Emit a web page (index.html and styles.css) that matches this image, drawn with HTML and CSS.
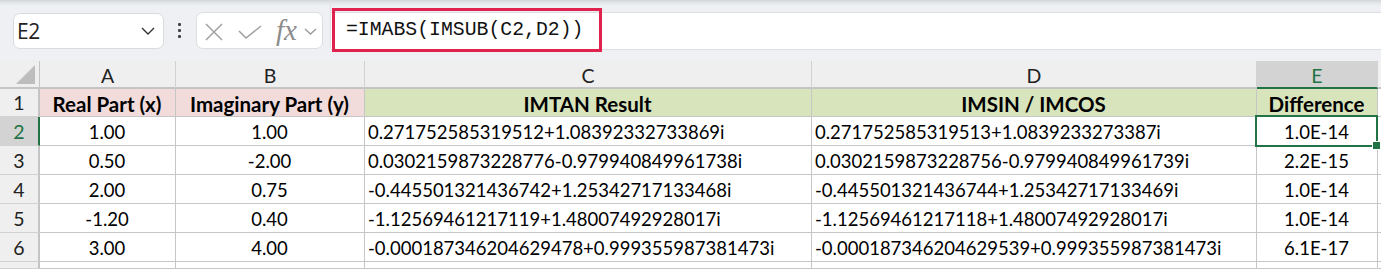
FILE: index.html
```html
<!DOCTYPE html>
<html lang="en">
<head>
<meta charset="utf-8">
<title>IMABS sheet</title>
<link rel="stylesheet" href="styles.css">
</head>
<body>
<div class="toolbar">
  <div class="namebox">
    <span class="name">E2</span>
    <svg class="chev" width="14" height="8" viewBox="0 0 14 8"><path d="M1 1 L7 7 L13 1" fill="none" stroke="#333" stroke-width="1.4"/></svg>
  </div>
  <div class="dots"><i></i><i></i><i></i></div>
  <div class="fxbox">
    <svg class="ix" width="18" height="18" viewBox="0 0 18 18"><path d="M1 1 L17 17 M17 1 L1 17" stroke="#a0a0a0" stroke-width="1.5" fill="none"/></svg>
    <svg class="ic" width="24" height="14" viewBox="0 0 24 14"><path d="M1 6 L8 13 L23 1" stroke="#a0a0a0" stroke-width="1.5" fill="none"/></svg>
    <span class="fx">fx</span>
    <svg class="iv" width="13" height="7" viewBox="0 0 13 7"><path d="M1 1 L6.5 6 L12 1" fill="none" stroke="#9a9a9a" stroke-width="1.3"/></svg>
  </div>
  <div class="sep"></div>
  <div class="formula">
    <div class="hl">=IMABS(IMSUB(C2,D2))</div>
  </div>
</div>

<div class="sheet">
  <div class="ch corner"><span class="tri"></span></div>
  <div class="ch">A</div>
  <div class="ch">B</div>
  <div class="ch">C</div>
  <div class="ch">D</div>
  <div class="ch sel">E</div>
  <div class="ch rest"></div>

  <div class="rh">1</div>
  <div class="c hd pink">Real Part (x)</div>
  <div class="c hd pink">Imaginary Part (y)</div>
  <div class="c hd green">IMTAN Result</div>
  <div class="c hd green">IMSIN / IMCOS</div>
  <div class="c hd green">Difference</div>
  <div class="c blank"></div>

  <div class="rh sel">2</div>
  <div class="c ctr">1.00</div>
  <div class="c ctr">1.00</div>
  <div class="c">0.271752585319512+1.08392332733869i</div>
  <div class="c">0.271752585319513+1.0839233273387i</div>
  <div class="c ctr active">1.0E-14</div>
  <div class="c blank"></div>

  <div class="rh">3</div>
  <div class="c ctr">0.50</div>
  <div class="c ctr">-2.00</div>
  <div class="c">0.0302159873228776-0.979940849961738i</div>
  <div class="c">0.0302159873228756-0.979940849961739i</div>
  <div class="c ctr">2.2E-15</div>
  <div class="c blank"></div>

  <div class="rh">4</div>
  <div class="c ctr">2.00</div>
  <div class="c ctr">0.75</div>
  <div class="c">-0.445501321436742+1.25342717133468i</div>
  <div class="c">-0.445501321436744+1.25342717133469i</div>
  <div class="c ctr">1.0E-14</div>
  <div class="c blank"></div>

  <div class="rh">5</div>
  <div class="c ctr">-1.20</div>
  <div class="c ctr">0.40</div>
  <div class="c">-1.12569461217119+1.48007492928017i</div>
  <div class="c">-1.12569461217118+1.48007492928017i</div>
  <div class="c ctr">1.0E-14</div>
  <div class="c blank"></div>

  <div class="rh">6</div>
  <div class="c ctr">3.00</div>
  <div class="c ctr">4.00</div>
  <div class="c">-0.000187346204629478+0.999355987381473i</div>
  <div class="c">-0.000187346204629539+0.999355987381473i</div>
  <div class="c ctr">6.1E-17</div>
  <div class="c blank"></div>

  <div class="rh"></div>
  <div class="c"></div>
  <div class="c"></div>
  <div class="c"></div>
  <div class="c"></div>
  <div class="c"></div>
  <div class="c blank"></div>
</div>
</body>
</html>
```

FILE: styles.css
```css
* { box-sizing: border-box; }
html, body { margin: 0; padding: 0; background: #ffffff; }
body { width: 1381px; height: 269px; overflow: hidden; font-family: Lato, "Open Sans", sans-serif; }

.toolbar {
  height: 61px;
  display: flex;
  align-items: flex-start;
  padding: 13px 0 0 13px;
  background: linear-gradient(#d3d6da 0, #e4e7ea 3px, #eef0f3 6px);
}
.namebox {
  width: 151px;
  height: 36px;
  background: #fff;
  border: 1px solid #d9dbde;
  border-radius: 7px;
  display: flex;
  align-items: center;
  justify-content: space-between;
  padding: 0 8px 0 3px;
}
.name { font-family: "Open Sans", sans-serif; font-size: 21px; color: #222; letter-spacing: -0.5px; }
.dots {
  width: 4px;
  margin: 10px 14px 0 14px;
  display: flex;
  flex-direction: column;
  gap: 3px;
}
.dots i { display: block; width: 3px; height: 3px; background: #444; border-radius: 1px; }
.fxbox {
  width: 127px;
  height: 37px;
  margin-top: -1px;
  background: #fff;
  border: 1px solid #dcdee1;
  border-radius: 7px;
  display: flex;
  align-items: center;
  padding: 0 0 0 8px;
}
.ix { margin-top: 2px; }
.ic { margin-left: 15px; margin-top: 2px; }
.fx {
  font-family: "Liberation Serif", serif;
  font-style: italic;
  font-size: 29px;
  color: #8c8c8c;
  line-height: 1;
  margin-left: 14px;
  margin-top: -1px;
}
.iv { margin-left: 7px; margin-top: 1px; }
.sep { width: 1px; height: 48px; margin: -13px 0 0 7px; background: #dfe1e4; }
.formula {
  flex: 1;
  height: 38px;
  margin-top: -1px;
  background: #fff;
  border-top: 1px solid #dcdee1;
  border-bottom: 1px solid #dcdee1;
  padding-left: 1px;
  display: flex;
  align-items: flex-start;
}
.hl {
  width: 270px;
  height: 44px;
  margin-top: -5px;
  border: 3px solid #e0224e;
  font-family: "Liberation Mono", monospace;
  font-size: 19.8px;
  color: #111;
  padding-left: 11px;
  display: flex;
  align-items: center;
}

.sheet {
  display: grid;
  grid-template-columns: 40px 136px 189px 447px 445px 121px 1fr;
  grid-template-rows: 28px 28px repeat(5, 29px) 1fr;
  height: 208px;
  font-size: 18.5px;
  color: #000;
}
.ch {
  background: #efefef;
  border-right: 1px solid #d2d2d2;
  border-bottom: 2px solid #c4c4c4;
  display: flex;
  align-items: center;
  justify-content: center;
  font-size: 19.5px;
  color: #222;
  padding-top: 2px;
}
.ch.corner { position: relative; border-right: 1px solid #c4c4c4; }
.tri {
  position: absolute;
  right: 4px;
  bottom: 3px;
  width: 0;
  height: 0;
  border-left: 19px solid transparent;
  border-bottom: 19px solid #bdbdbd;
}
.ch.sel { background: #d3d3d3; color: #217346; border-bottom: 2px solid #217346; }
.ch.rest { border-right: none; background: #f2f2f2; }
.rh {
  background: #efefef;
  border-right: 2px solid #c4c4c4;
  border-bottom: 1px solid #d2d2d2;
  display: flex;
  align-items: center;
  justify-content: center;
  font-size: 19.5px;
  color: #222;
}
.rh.sel { background: #d3d3d3; color: #217346; border-right: 2px solid #217346; }
.c {
  border-right: 1px solid #c6c6c6;
  border-bottom: 1px solid #c6c6c6;
  display: flex;
  align-items: center;
  padding: 1px 4px 0 3px;
  white-space: nowrap;
  overflow: visible;
}
.c.ctr, .c.hd { justify-content: center; }
.c.hd { font-weight: 700; font-size: 20.5px; padding-top: 2px; }
.pink { background: #f2dcdb; }
.green { background: #d8e4bc; }
.c.blank { border-right: none; }
.active { position: relative; }
.active::before {
  content: "";
  position: absolute;
  left: -2px;
  top: -2px;
  right: -1px;
  bottom: -2px;
  border: 2px solid #217346;
}
.active::after {
  content: "";
  position: absolute;
  right: -4px;
  bottom: -5px;
  width: 7px;
  height: 7px;
  background: #217346;
  border: 1px solid #fff;
}
```
